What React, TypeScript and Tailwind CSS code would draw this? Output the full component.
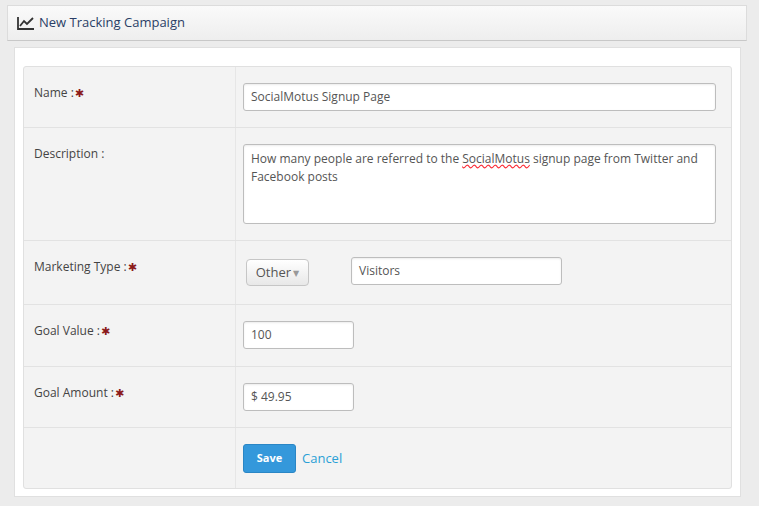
const Star = () => <span className="text-[#8b1a1a] text-[11px] ml-[1px]">&#10033;</span>;

function Row({ label, req, h, children, last }: { label: string; req?: boolean; h: string; children: React.ReactNode; last?: boolean }) {
  return (
    <div className={`flex ${h} ${last ? "" : "border-b border-[#e2e2e2]"}`}>
      <div className="w-[212px] shrink-0 border-r border-[#e6e6e6] pl-[10px] pt-[17px] text-[12px] text-[#444]">
        {label}{req && <Star />}
      </div>
      <div className="flex-1 pl-[7px] pt-[16px]">{children}</div>
    </div>
  );
}

const boxCls = "rounded-[3px] border border-[#bdbdbd] bg-white px-[7px] text-[12px] text-[#555] shadow-[inset_0_1px_2px_rgba(0,0,0,0.08)]";
const inputCls = `${boxCls} h-[28px] flex items-center`;

export default function App() {
  return (
    <div className="w-[759px] h-[506px] bg-[#ececec] pt-[5px] pl-[7px] pr-[12px]" style={{ fontFamily: '"Open Sans", "DejaVu Sans", sans-serif' }}>
      <div className="h-[36px] bg-gradient-to-b from-[#fafafa] to-[#eeeeee] border border-[#dcdcdc] border-b-[#c8c8c8] flex items-center pl-[9px] gap-[4px]">
        <svg width="18" height="14" viewBox="0 0 18 14" fill="none" stroke="#333" strokeWidth="1.8">
          <path d="M1 1v12h16" />
          <path d="M3 10l4-5 3 3 6-6" />
        </svg>
        <span className="text-[13px] text-[#2a3e66]">New Tracking Campaign</span>
      </div>
      <div className="mt-[6px] ml-[7px] mr-[6px] h-[450px] bg-white border border-[#e0e0e0] px-[8px] pt-[18px]">
        <div className="bg-[#f3f3f3] border border-[#e0e0e0] rounded-[3px]">
          <Row label="Name :" req h="h-[61px]">
            <div className={`${inputCls} w-[473px]`}>SocialMotus Signup Page</div>
          </Row>
          <Row label="Description :" h="h-[113px]">
            <div className={`${boxCls} w-[473px] h-[80px] pt-[5px] leading-[18px]`}>
              How many people are referred to the <span className="underline decoration-wavy decoration-red-500">SocialMotus</span> signup page from Twitter and Facebook posts
            </div>
          </Row>
          <Row label="Marketing Type :" req h="h-[64px]">
            <div className="flex items-start gap-[42px]">
              <div className="mt-[2px] ml-[3px] h-[27px] w-[63px] rounded-[4px] border border-[#c6c6c6] bg-gradient-to-b from-white to-[#e8e8e8] flex items-center justify-center text-[13px] text-[#555] gap-[2px]">
                Other<span className="text-[#999] text-[8px]">&#9660;</span>
              </div>
              <div className={`${inputCls} w-[211px]`}>Visitors</div>
            </div>
          </Row>
          <Row label="Goal Value :" req h="h-[62px]">
            <div className={`${inputCls} w-[111px]`}>100</div>
          </Row>
          <Row label="Goal Amount :" req h="h-[61px]">
            <div className={`${inputCls} w-[111px]`}>$ 49.95</div>
          </Row>
          <Row label="" h="h-[60px]" last>
            <div className="flex items-center gap-[6px]">
              <div className="h-[29px] w-[53px] rounded-[3px] bg-[#3498db] border border-[#2a86c5] text-white text-[11px] font-bold flex items-center justify-center">Save</div>
              <span className="text-[13px] text-[#2aa0d6]">Cancel</span>
            </div>
          </Row>
        </div>
      </div>
    </div>
  );
}
